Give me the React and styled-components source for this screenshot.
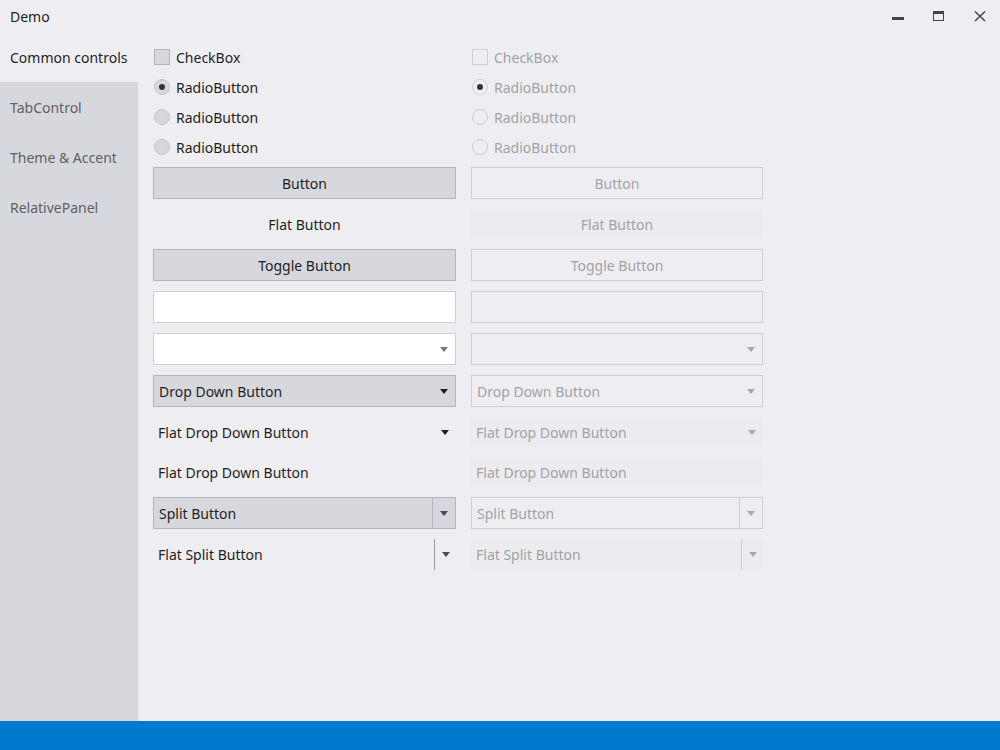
import React from "react";
import styled, { createGlobalStyle, css } from "styled-components";

const GlobalStyle = createGlobalStyle`
  html, body { margin: 0; padding: 0; }
  body { font-family: "Noto Sans", "Open Sans", sans-serif; }
  * { box-sizing: border-box; }
`;

const C = {
  page: "#EEEEF2",
  side: "#D7D8DE",
  ctrl: "#D7D8DE",
  border: "#B4B5BC",
  borderDis: "#CCCEDB",
  text: "#1E1E1E",
  textDis: "#A2A2A4",
  nav: "#5F5F63",
  flatDis: "#ECECF0",
  accent: "#007ACC",
};

const Window = styled.div`
  width: 1000px;
  height: 750px;
  display: flex;
  flex-direction: column;
  background: ${C.page};
  color: ${C.text};
  overflow: hidden;
`;

const TitleBar = styled.div`
  height: 32px;
  display: flex;
  align-items: center;
  flex-shrink: 0;
`;

const Title = styled.div`
  flex: 1;
  padding-left: 10px;
  font-size: 14px;
  color: ${C.text};
`;

const WinButtons = styled.div`
  display: flex;
  height: 32px;
`;

const WinButton = styled.div`
  width: 41px;
  height: 32px;
  display: flex;
  align-items: center;
  justify-content: center;
  color: #444448;
`;

const Body = styled.div`
  flex: 1;
  display: flex;
  min-height: 0;
`;

const Sidebar = styled.nav`
  width: 138px;
  background: ${C.side};
  display: flex;
  flex-direction: column;
`;

const NavItem = styled.div`
  height: 50px;
  display: flex;
  align-items: center;
  padding-left: 10px;
  font-size: 14px;
  color: ${(p) => (p.$active ? C.text : C.nav)};
  background: ${(p) => (p.$active ? C.page : "transparent")};
`;

const Content = styled.main`
  flex: 1;
  padding: 11px 15px;
`;

const Grid = styled.div`
  display: grid;
  grid-template-columns: 303px 292px;
  column-gap: 15px;
  align-items: start;
`;

const ChecksGrid = styled(Grid)`
  grid-auto-rows: 30px;
  margin-bottom: 4px;
`;

const ControlsGrid = styled(Grid)`
  row-gap: 10px;
`;

const CheckRow = styled.label`
  display: flex;
  align-items: center;
  gap: 6px;
  height: 30px;
  padding: 0 0 2px 1px;
  font-size: 14px;
  color: ${(p) => (p.$disabled ? C.textDis : C.text)};
`;

const Box = styled.span`
  width: 16px;
  height: 16px;
  border: 1px solid ${(p) => (p.$disabled ? C.borderDis : C.border)};
  background: ${(p) => (p.$disabled ? C.page : C.ctrl)};
`;

const Radio = styled.span`
  width: 16px;
  height: 16px;
  border-radius: 50%;
  border: 1px solid ${(p) => (p.$disabled ? C.borderDis : "#C3C4CB")};
  background: ${(p) => (p.$disabled ? C.page : C.ctrl)};
  display: flex;
  align-items: center;
  justify-content: center;
  &::after {
    content: "";
    width: 6px;
    height: 6px;
    border-radius: 50%;
    background: ${(p) => (p.$checked ? "#333336" : "transparent")};
  }
`;

const base = css`
  display: flex;
  align-items: center;
  font-size: 14px;
  font-family: inherit;
  color: ${(p) => (p.$disabled ? C.textDis : C.text)};
`;

const Button = styled.div`
  ${base};
  height: ${(p) => (p.$flat ? 30 : 32)}px;
  justify-content: ${(p) => (p.$left ? "flex-start" : "center")};
  padding: 0 5px;
  border: ${(p) =>
    p.$flat ? "none" : `1px solid ${p.$disabled ? C.borderDis : C.border}`};
  background: ${(p) =>
    p.$flat ? (p.$disabled ? C.flatDis : "transparent") : p.$disabled ? C.page : C.ctrl};
`;

const Label = styled.span`
  flex: 1;
  text-align: left;
`;

const TextBox = styled.div`
  height: 32px;
  border: 1px solid ${C.borderDis};
  background: ${(p) => (p.$disabled ? C.page : "#FFFFFF")};
  display: flex;
  align-items: center;
  justify-content: flex-end;
  padding-right: 7px;
`;

const Arrow = styled.span`
  width: 0;
  height: 0;
  border-left: 4.5px solid transparent;
  border-right: 4.5px solid transparent;
  border-top: 5px solid ${(p) => p.$color};
  flex-shrink: 0;
  margin-right: ${(p) => p.$mr ?? 2}px;
`;

const SplitMain = styled.span`
  ${base};
  flex: 1;
  align-self: stretch;
`;

const SplitPart = styled.span`
  width: 23px;
  align-self: stretch;
  display: flex;
  align-items: center;
  justify-content: center;
  border-left: 1px solid ${(p) => p.$line};
  margin-right: -5px;
`;

const FlatSplitPart = styled(SplitPart)`
  align-self: center;
  height: 31px;
  width: 22px;
  margin-right: -5px;
`;

const StatusBar = styled.footer`
  height: 29px;
  flex-shrink: 0;
  background: ${C.accent};
`;

function Minimize() {
  return (
    <svg width="12" height="12" viewBox="0 0 12 12">
      <rect x="0" y="7" width="12" height="3" fill="currentColor" />
    </svg>
  );
}
function Maximize() {
  return (
    <svg width="12" height="12" viewBox="0 0 12 12">
      <rect x="0.5" y="1.5" width="10" height="9" fill="none" stroke="currentColor" strokeWidth="1" />
      <rect x="0" y="1" width="11" height="3" fill="currentColor" />
    </svg>
  );
}
function Close() {
  return (
    <svg width="12" height="12" viewBox="0 0 12 12">
      <path d="M1 1.5 L11 11 M11 1.5 L1 11" stroke="currentColor" strokeWidth="1.5" fill="none" />
    </svg>
  );
}

export default function App() {
  const cols = [false, true];
  const dark = (d) => (d ? "#A8A8AA" : "#1E1E1E");
  const gray = (d) => (d ? "#A8A8AA" : "#77777B");
  const splitGray = (d) => (d ? "#A8A8AA" : "#4A4A4E");
  return (
    <Window>
      <GlobalStyle />
      <TitleBar>
        <Title>Demo</Title>
        <WinButtons>
          <WinButton><Minimize /></WinButton>
          <WinButton><Maximize /></WinButton>
          <WinButton><Close /></WinButton>
        </WinButtons>
      </TitleBar>
      <Body>
        <Sidebar>
          <NavItem $active>Common controls</NavItem>
          <NavItem>TabControl</NavItem>
          <NavItem>Theme &amp; Accent</NavItem>
          <NavItem>RelativePanel</NavItem>
        </Sidebar>
        <Content>
          <ChecksGrid>
            {cols.map((d) => (
              <CheckRow key={"c" + d} $disabled={d}>
                <Box $disabled={d} />
                CheckBox
              </CheckRow>
            ))}
            {[true, false, false].map((checked, i) =>
              cols.map((d) => (
                <CheckRow key={"r" + i + d} $disabled={d}>
                  <Radio $disabled={d} $checked={checked} />
                  RadioButton
                </CheckRow>
              ))
            )}
          </ChecksGrid>
          <ControlsGrid>
            {cols.map((d) => (
              <Button key={"b" + d} $disabled={d}>Button</Button>
            ))}
            {cols.map((d) => (
              <Button key={"fb" + d} $disabled={d} $flat>Flat Button</Button>
            ))}
            {cols.map((d) => (
              <Button key={"tb" + d} $disabled={d}>Toggle Button</Button>
            ))}
            {cols.map((d) => (
              <TextBox key={"tx" + d} $disabled={d} />
            ))}
            {cols.map((d) => (
              <TextBox key={"cb" + d} $disabled={d}>
                <Arrow $color={gray(d)} $mr={0} />
              </TextBox>
            ))}
            {cols.map((d) => (
              <Button key={"dd" + d} $disabled={d} $left>
                <Label>Drop Down Button</Label>
                <Arrow $color={d ? gray(d) : dark(d)} $mr={2} />
              </Button>
            ))}
            {cols.map((d) => (
              <Button key={"fdd" + d} $disabled={d} $flat $left>
                <Label>Flat Drop Down Button</Label>
                <Arrow $color={d ? gray(d) : dark(d)} $mr={2} />
              </Button>
            ))}
            {cols.map((d) => (
              <Button key={"fdd2" + d} $disabled={d} $flat $left>
                <Label>Flat Drop Down Button</Label>
              </Button>
            ))}
            {cols.map((d) => (
              <Button key={"sp" + d} $disabled={d} $left>
                <SplitMain $disabled={d}>Split Button</SplitMain>
                <SplitPart $line={d ? C.borderDis : C.border}>
                  <Arrow $color={splitGray(d)} $mr={0} />
                </SplitPart>
              </Button>
            ))}
            {cols.map((d) => (
              <Button key={"fsp" + d} $disabled={d} $flat $left>
                <SplitMain $disabled={d}>Flat Split Button</SplitMain>
                <FlatSplitPart $line={d ? C.borderDis : "#9A9AA0"}>
                  <Arrow $color={splitGray(d)} $mr={0} />
                </FlatSplitPart>
              </Button>
            ))}
          </ControlsGrid>
        </Content>
      </Body>
      <StatusBar />
    </Window>
  );
}
